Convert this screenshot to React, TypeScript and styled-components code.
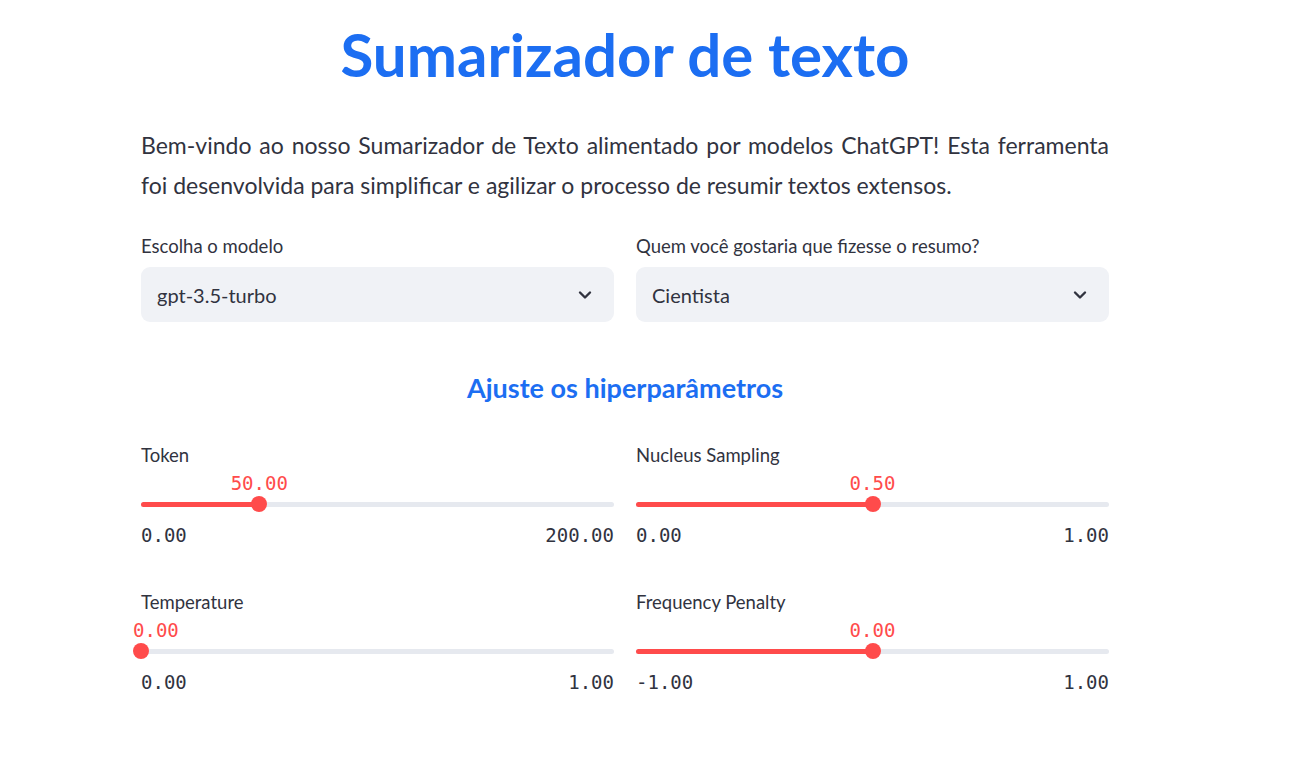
import styled, { createGlobalStyle } from 'styled-components';

const GlobalStyle = createGlobalStyle`
  body {
    margin: 0;
    background: #ffffff;
    color: #31333f;
    font-family: Lato, "Liberation Sans", sans-serif;
  }
`;

type SliderData = {
  label: string;
  value: number;
  min: number;
  max: number;
};

const sliders: SliderData[] = [
  { label: 'Token', value: 50, min: 0, max: 200 },
  { label: 'Nucleus Sampling', value: 0.5, min: 0, max: 1 },
  { label: 'Temperature', value: 0, min: 0, max: 1 },
  { label: 'Frequency Penalty', value: 0, min: -1, max: 1 },
];

function Chevron() {
  return (
    <svg width="16" height="16" viewBox="0 0 16 16" fill="none">
      <path d="M3 5.5 L8 10.5 L13 5.5" stroke="#31333f" strokeWidth="2.4" strokeLinecap="round" strokeLinejoin="round" />
    </svg>
  );
}

function Select({ label, value }: { label: string; value: string }) {
  return (
    <Field>
      <Label>{label}</Label>
      <SelectBox>
        <span>{value}</span>
        <Chevron />
      </SelectBox>
    </Field>
  );
}

function Slider({ label, value, min, max }: SliderData) {
  const pct = ((value - min) / (max - min)) * 100;
  const atStart = pct === 0;
  return (
    <Field>
      <Label>{label}</Label>
      <SliderArea>
        <ValueTag atStart={atStart} style={{ left: `${pct}%` }}>{value.toFixed(2)}</ValueTag>
        <Track>
          <Fill style={{ width: `${pct}%` }} />
          <Thumb style={{ left: `${pct}%` }} />
        </Track>
      </SliderArea>
      <MinMax>
        <span>{min.toFixed(2)}</span>
        <span>{max.toFixed(2)}</span>
      </MinMax>
    </Field>
  );
}

export default function App() {
  return (
    <>
      <GlobalStyle />
      <Page>
        <Title>Sumarizador de texto</Title>
        <Intro>
          Bem-vindo ao nosso Sumarizador de Texto alimentado por modelos ChatGPT! Esta ferramenta
          foi desenvolvida para simplificar e agilizar o processo de resumir textos extensos.
        </Intro>
        <SelectRow>
          <Select label="Escolha o modelo" value="gpt-3.5-turbo" />
          <Select label="Quem você gostaria que fizesse o resumo?" value="Cientista" />
        </SelectRow>
        <Subheader>Ajuste os hiperparâmetros</Subheader>
        <SliderGrid>
          {sliders.map((s) => (
            <Slider key={s.label} {...s} />
          ))}
        </SliderGrid>
      </Page>
    </>
  );
}

const Page = styled.main`
  width: 968px;
  padding-left: 141px;
  padding-bottom: 60px;
`;

const Title = styled.h1`
  margin: 0;
  padding-top: 21px;
  font-size: 60px;
  line-height: 67px;
  font-weight: 700;
  color: #1c6ef2;
  text-align: center;
`;

const Intro = styled.p`
  margin: 37px 0 0;
  font-size: 23px;
  line-height: 40px;
  text-align: justify;
  color: #31333f;
`;

const SelectRow = styled.div`
  display: grid;
  grid-template-columns: 1fr 1fr;
  column-gap: 22px;
  margin-top: 29px;
`;

const Field = styled.div`
  display: flex;
  flex-direction: column;
`;

const Label = styled.label`
  font-size: 18.5px;
  line-height: 24px;
  color: #31333f;
`;

const SelectBox = styled.div`
  margin-top: 9px;
  height: 55px;
  box-sizing: border-box;
  display: flex;
  align-items: center;
  justify-content: space-between;
  padding: 0 21px 0 16px;
  background: #f0f2f6;
  border-radius: 9px;
  font-size: 20px;
  color: #31333f;
`;

const Subheader = styled.h3`
  margin: 50px 0 0;
  font-size: 27px;
  line-height: 32px;
  font-weight: 700;
  color: #1c6ef2;
  text-align: center;
`;

const SliderGrid = styled.div`
  display: grid;
  grid-template-columns: 1fr 1fr;
  column-gap: 22px;
  row-gap: 43px;
  margin-top: 39px;
`;

const SliderArea = styled.div`
  position: relative;
  padding-top: 28px;
`;

const ValueTag = styled.div<{ atStart: boolean }>`
  position: absolute;
  top: 4px;
  transform: ${(p) => (p.atStart ? 'translateX(-8px)' : 'translateX(-50%)')};
  font-family: "DejaVu Sans Mono", "Liberation Mono", monospace;
  font-size: 19px;
  line-height: 24px;
  color: #ff4b4b;
  white-space: nowrap;
`;

const Track = styled.div`
  position: relative;
  height: 18px;
  &::before {
    content: "";
    position: absolute;
    left: 0;
    right: 0;
    top: 6.5px;
    height: 5px;
    border-radius: 3px;
    background: #e6e9ef;
  }
`;

const Fill = styled.div`
  position: absolute;
  left: 0;
  top: 6.5px;
  height: 5px;
  border-radius: 3px;
  background: #ff4b4b;
`;

const Thumb = styled.div`
  position: absolute;
  top: 1px;
  width: 16px;
  height: 16px;
  margin-left: -8px;
  border-radius: 50%;
  background: #ff4b4b;
`;

const MinMax = styled.div`
  display: flex;
  justify-content: space-between;
  margin-top: 10px;
  font-family: "DejaVu Sans Mono", "Liberation Mono", monospace;
  font-size: 19px;
  line-height: 24px;
  color: #31333f;
`;
